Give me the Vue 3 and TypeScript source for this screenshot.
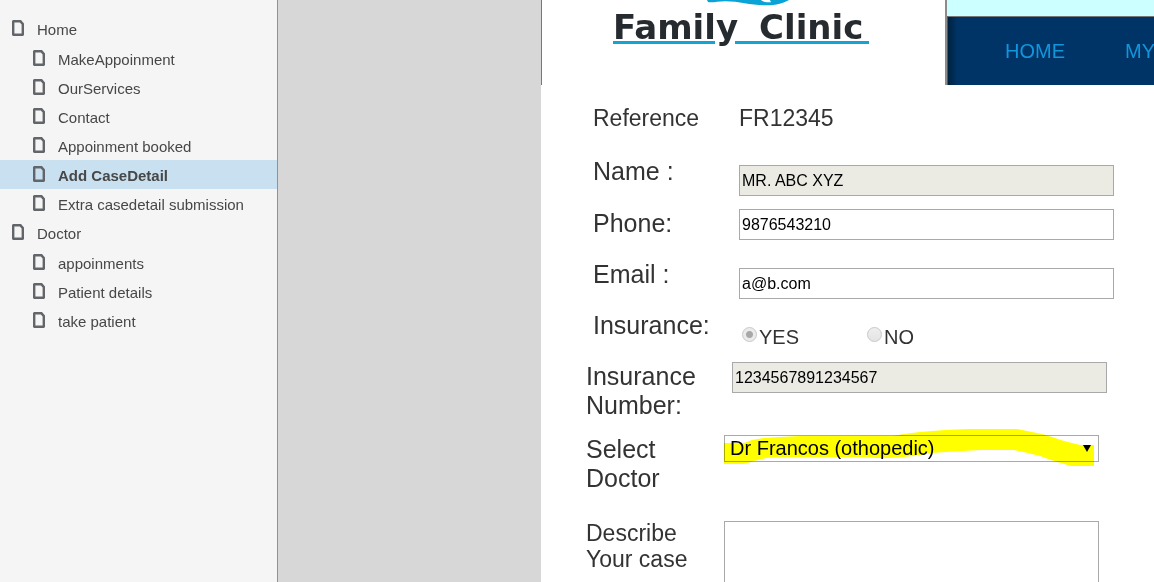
<script setup lang="ts">
import { ref } from 'vue'

interface Page {
  title: string
  children?: Page[]
}

const pages: Page[] = [
  {
    title: 'Home',
    children: [
      { title: 'MakeAppoinment' },
      { title: 'OurServices' },
      { title: 'Contact' },
      { title: 'Appoinment booked' },
      { title: 'Add CaseDetail' },
      { title: 'Extra casedetail submission' },
    ],
  },
  {
    title: 'Doctor',
    children: [
      { title: 'appoinments' },
      { title: 'Patient details' },
      { title: 'take patient' },
    ],
  },
]

const current = ref('Add CaseDetail')
const reference = 'FR12345'
const name = ref('MR. ABC XYZ')
const phone = ref('9876543210')
const email = ref('a@b.com')
const insured = ref('yes')
const insuranceNumber = ref('1234567891234567')
const doctor = ref('Dr Francos (othopedic)')
const description = ref('')
</script>

<template>
  <div class="app">
    <nav class="sidebar" aria-label="Pages">
      <ul class="tree">
        <li v-for="group in pages" :key="group.title">
          <a href="#" class="row" @click.prevent="current = group.title">
            <svg class="page-icon" viewBox="0 0 12 16" aria-hidden="true">
              <path fill="#62666a" fill-rule="evenodd" d="M1 0H9L12 3.500V15L11 16H1L0 15V1ZM2.400 2.400V13.600H9.600V4.600L7.800 2.400Z" />
            </svg>
            <span>{{ group.title }}</span>
          </a>
          <ul class="branch">
            <li v-for="page in group.children" :key="page.title">
              <a
                href="#"
                class="row child"
                :class="{ active: page.title === current }"
                @click.prevent="current = page.title"
              >
                <svg class="page-icon" viewBox="0 0 12 16" aria-hidden="true">
                  <path fill="#62666a" fill-rule="evenodd" d="M1 0H9L12 3.500V15L11 16H1L0 15V1ZM2.400 2.400V13.600H9.600V4.600L7.800 2.400Z" />
                </svg>
                <span>{{ page.title }}</span>
              </a>
            </li>
          </ul>
        </li>
      </ul>
    </nav>

    <main class="page">
      <header class="header">
        <div class="brand">
          <svg class="swirl" viewBox="0 0 82 6" aria-hidden="true">
            <path fill="#0aa3d6" d="M0 0H82C77 3 69 5.500 57 5.300C43 5 31 1 18 1.200C10 1.400 5 3 1 2Z" />
            <path fill="#fff" d="M54 0H63L64 2.200C60 2.500 56 2 54 0Z" />
          </svg>
          <div class="wordmark"><span>Family</span><span>Clinic</span></div>
          <div class="rules"><i class="rule-a"></i><i class="rule-b"></i></div>
        </div>
        <div class="top">
          <div class="strip"></div>
          <nav class="menu" aria-label="Main">
            <a href="#">HOME</a>
            <a href="#">MY</a>
          </nav>
        </div>
      </header>

      <form class="form" @submit.prevent>
        <div class="field">
          <span class="label small">Reference</span>
          <output class="value">{{ reference }}</output>
        </div>
        <div class="field">
          <label class="label" for="name">Name :</label>
          <div class="control lowered"><input id="name" v-model="name" class="text" type="text" readonly /></div>
        </div>
        <div class="field">
          <label class="label" for="phone">Phone:</label>
          <div class="control"><input id="phone" v-model="phone" class="text" type="text" /></div>
        </div>
        <div class="field">
          <label class="label" for="email">Email :</label>
          <div class="control lowered"><input id="email" v-model="email" class="text" type="text" /></div>
        </div>
        <div class="field" role="radiogroup" aria-labelledby="insurance-label">
          <span id="insurance-label" class="label">Insurance:</span>
          <div class="options">
            <label class="option"><input v-model="insured" type="radio" name="insured" value="yes" disabled />YES</label>
            <label class="option"><input v-model="insured" type="radio" name="insured" value="no" disabled />NO</label>
          </div>
        </div>
        <div class="field outer tall">
          <label class="label" for="number">Insurance Number:</label>
          <div class="control"><input id="number" v-model="insuranceNumber" class="text" type="text" readonly /></div>
        </div>
        <div class="field outer narrow taller">
          <label class="label" for="doctor">Select Doctor</label>
          <div class="control picker">
            <select id="doctor" v-model="doctor">
              <option>Dr Francos (othopedic)</option>
            </select>
            <svg class="arrow" viewBox="0 0 8 7" aria-hidden="true"><path d="M0 0H8L4 7Z" /></svg>
            <svg class="marker" viewBox="0 0 375 38" preserveAspectRatio="none" aria-hidden="true">
              <path fill="#ff0" d="M0 14H20L28 11L40 9L56 8L76 7H169L180 5L196 3L221 1L244 0H293L308 3L318 5L328 8L340 12L356 16H370V37H347L330 32L316 27L304 24L290 21H256L206 24L190 27L168 29H152L140 28H60L42 29L30 32L20 35H0Z" />
            </svg>
          </div>
        </div>
        <div class="field outer narrow">
          <label class="label small" for="describe">Describe Your case</label>
          <div class="control"><textarea id="describe" v-model="description" rows="6"></textarea></div>
        </div>
      </form>
    </main>
  </div>
</template>

<style>
body {
  margin: 0;
}
</style>

<style scoped>
* {
  box-sizing: border-box;
}

.app {
  display: flex;
  gap: 263px;
  height: 100vh;
  overflow: hidden;
  background: #d7d7d7;
  color: #333;
  font-family: "Liberation Sans", Arial, sans-serif;
}

.sidebar {
  flex: 0 0 278px;
  padding-top: 14px;
  background: #f5f5f5;
  border-right: 1px solid #8f9399;
}

.tree,
.branch {
  margin: 0;
  padding: 0;
  list-style: none;
}

.branch {
  padding-top: 1px;
}

.row {
  display: flex;
  align-items: flex-start;
  gap: 13px;
  height: 29px;
  padding: 6px 0 0 12px;
  color: #474747;
  font-size: 15px;
  line-height: 20px;
  text-decoration: none;
  white-space: nowrap;
}

.row.child {
  padding-left: 33px;
}

.row.active {
  background: #c9e0f0;
  font-weight: bold;
}

.page-icon {
  flex: none;
  width: 12px;
  height: 16px;
}

.page {
  flex: 1;
  min-width: 0;
  overflow: hidden;
  background: #fff;
}

.header {
  display: flex;
  height: 85px;
}

.brand {
  flex: 0 0 406px;
  padding-left: 71px;
  border-left: 1px solid #777;
  border-right: 2px solid #8c8c8c;
}

.swirl {
  display: block;
  width: 82px;
  height: 6px;
  margin-left: 94px;
}

.wordmark {
  display: flex;
  gap: 21px;
  height: 35px;
  color: #262b30;
  font-family: "DejaVu Sans", sans-serif;
  font-size: 34px;
  font-weight: bold;
  line-height: 42px;
}

.rules {
  display: flex;
  gap: 20px;
}

.rules i {
  height: 3px;
  background: #15a3d2;
}

.rule-a {
  width: 102px;
}

.rule-b {
  width: 134px;
}

.top {
  display: flex;
  flex: 1;
  flex-direction: column;
  min-width: 0;
}

.strip {
  height: 16px;
  background: #cff;
}

.menu {
  display: flex;
  flex: 1;
  gap: 60px;
  padding: 22px 0 0 57px;
  border-top: 1px solid #777;
  border-left: 1px solid #555;
  background: linear-gradient(to right, #00213f, #036 9px);
  overflow: hidden;
}

.menu a {
  color: #1296db;
  font-size: 20px;
  line-height: 24px;
  text-decoration: none;
}

.form {
  padding: 20px 40px 0 45px;
}

.field {
  display: grid;
  grid-template-columns: 146px minmax(0, 1fr);
  min-height: 51px;
  padding-left: 7px;
}

.field:nth-child(-n + 2) {
  min-height: 52px;
}

.field.outer {
  padding: 0 7px 0 0;
}

.field.narrow {
  grid-template-columns: 138px minmax(0, 1fr);
  padding-right: 15px;
}

.field.tall {
  min-height: 73px;
}

.field.taller {
  min-height: 85px;
}

.label {
  font-size: 25px;
  line-height: 29px;
}

.label.small,
.value {
  font-size: 23px;
  line-height: 26px;
}

.narrow .label.small {
  width: 104px;
}

.lowered {
  padding-top: 8px;
}

.text,
select,
textarea {
  display: block;
  width: 100%;
  margin: 0;
  border: 1px solid #a9a9a9;
  border-radius: 0;
  background: #fff;
  color: #000;
  font-family: inherit;
  outline: none;
}

.text {
  height: 31px;
  padding: 0 2px;
  font-size: 16px;
}

.text:read-only {
  background: #ebebe4;
}

.options {
  display: grid;
  grid-template-columns: 125px 1fr;
  padding: 14px 0 0 3px;
}

.option {
  display: flex;
  align-items: flex-start;
  gap: 2px;
  font-size: 20px;
  line-height: 24px;
}

.option input {
  width: 15px;
  height: 15px;
  margin: 2px 0 0;
  appearance: none;
  border: 1px solid #c8c8c8;
  border-radius: 50%;
  background: linear-gradient(#eee, #e4e4e4);
}

.option input:checked {
  background: radial-gradient(circle, #a8a8a8 3px, #ebebeb 4px);
}

.picker {
  position: relative;
  align-self: start;
}

select {
  height: 27px;
  padding: 0 20px 0 5px;
  appearance: none;
  font-size: 20px;
  line-height: 25px;
}

.arrow {
  position: absolute;
  top: 10px;
  right: 8px;
  width: 8px;
  height: 7px;
  pointer-events: none;
}

.marker {
  position: absolute;
  top: -6px;
  left: 0;
  width: 100%;
  height: 38px;
  mix-blend-mode: multiply;
  pointer-events: none;
}

textarea {
  height: 160px;
  margin-top: 1px;
  padding: 2px;
  font-size: 16px;
  resize: none;
}
</style>
